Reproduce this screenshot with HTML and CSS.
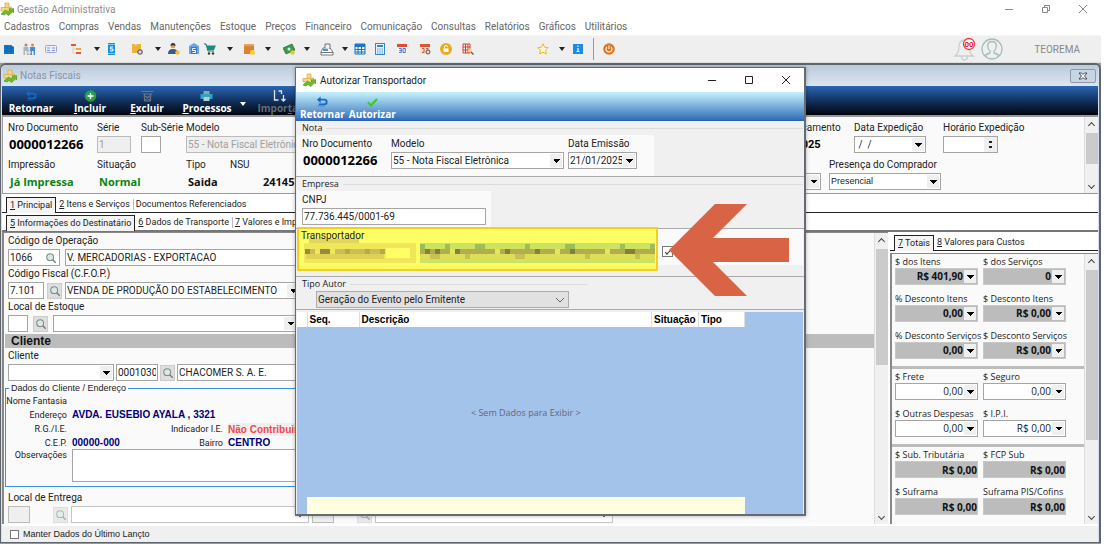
FILE: index.html
```html
<!DOCTYPE html>
<html lang="pt-BR">
<head>
<meta charset="utf-8">
<title>Gestão Administrativa</title>
<link rel="stylesheet" href="styles.css">
</head>
<body>
<svg class="defs" aria-hidden="true">
  <symbol id="logo" viewBox="0 0 14 14"><path d="M5 1h4v4h2.500v4H1V5.500h4z" fill="#f3d983" stroke="#cfa944" stroke-width=".7"/><path d="M5 5.500h4" stroke="#cfa944" stroke-width=".7"/><path d="M1 12l4.500-4 2.500 2 2-2-1.200-1.200H14V11l-1.200-1.200L8.500 13.500 6 11.500 4 13z" fill="#6fbb2a" stroke="#4a8f18" stroke-width=".6"/></symbol>
  <symbol id="lens" viewBox="0 0 14 14"><circle cx="6" cy="6" r="4" fill="#dbe7e2" stroke="#7d8f8a" stroke-width="1.200"/><path d="M9 9l3.500 3.500" stroke="#777" stroke-width="1.500"/></symbol>
  <symbol id="back" viewBox="0 0 14 12"><path d="M3.500 3.500h5.500q2.500 0 2.500 2.500T9 8.500H3" fill="none" stroke="#1967c4" stroke-width="2"/><path d="M5 0v7L1 3.500z" fill="#1967c4"/><path d="M2 10.500h8" stroke="#1967c4" stroke-width="1" stroke-dasharray="1 1"/></symbol>
</svg>

<header class="titlebar">
  <svg class="logo"><use href="#logo"/></svg>
  <h1>Gestão Administrativa</h1>
  <div class="win-buttons main-buttons">
    <button aria-label="Minimizar"><svg viewBox="0 0 10 10"><path d="M1 5.500h8"/></svg></button>
    <button aria-label="Restaurar"><svg viewBox="0 0 10 10"><path d="M1.500 3.500h5v5h-5zM3.500 3V1.500h5v5H7"/></svg></button>
    <button aria-label="Fechar"><svg viewBox="0 0 10 10"><path d="M1 1l8 8M9 1L1 9"/></svg></button>
  </div>
</header>
<nav class="menubar">
  <a href="#">Cadastros</a><a href="#">Compras</a><a href="#">Vendas</a><a href="#">Manutenções</a><a href="#">Estoque</a><a href="#">Preços</a><a href="#">Financeiro</a><a href="#">Comunicação</a><a href="#">Consultas</a><a href="#">Relatórios</a><a href="#">Gráficos</a><a href="#">Utilitários</a>
</nav>
<div class="toolbar">
  <div class="tools">
    <button aria-label="Empresas"><svg viewBox="0 0 12 12"><path d="M1 2h7l3 2v7H1z" fill="#1478c8"/><path d="M1 5h10M1 8h10M4 2v9M8 2v9" stroke="#0b5ea6" stroke-width=".6"/></svg></button>
    <button aria-label="Parceiros"><svg class="wide" viewBox="0 0 14 13"><circle cx="4" cy="2" r="1.500" fill="#b98463"/><circle cx="10.500" cy="2" r="1.500" fill="#c98b66"/><path d="M1.500 4h5v8h-1.500V8H3v4H1.500z" fill="#a5b8ba"/><path d="M8 4h5v8h-1.500V8H10v4H8z" fill="#3f8fd8"/><path d="M5 8h4v3H5z" fill="#f2e2d0" stroke="#a98" stroke-width=".6"/></svg></button>
    <button aria-label="Cartões"><svg viewBox="0 0 12 12"><rect x=".5" y="2.500" width="11" height="7" rx="1" fill="#eef" stroke="#9aa4dc"/><path d="M2 5h3M7 5h3M2 7.500h3M7 7.500h3" stroke="#8790d0"/></svg></button>
    <button aria-label="Estrutura"><svg viewBox="0 0 12 12"><path d="M1 1h5v2H1zM6 9h5v2H6z" fill="#e8552c"/><path d="M6 5h5v2H6z" fill="#f4a63a"/><path d="M3 3v7h3M3 6h3" fill="none" stroke="#d9d0c0"/></svg></button>
    <button class="caret" aria-label="Mais"></button>
    <button aria-label="Serviços"><svg viewBox="0 0 12 12"><path d="M2 0h7v12H2z" fill="#1b8fe0"/><path d="M2 1.500h7M2 10.500h7" stroke="#6fd0f0"/><path d="M7 4H4.500v2H7v2H4" fill="none" stroke="#fff"/></svg></button>
    <button aria-label="Produtos"><svg viewBox="0 0 12 12"><path d="M1 1h3l1 2 1-2h4v9H1z" fill="#f0b434"/><circle cx="9" cy="9" r="2.200" fill="#ddd" stroke="#667" stroke-width="1.200"/></svg></button>
    <button class="caret" aria-label="Mais"></button>
    <button aria-label="Vendedor"><svg viewBox="0 0 12 12"><circle cx="5" cy="3" r="2.300" fill="#d79b5a"/><path d="M2.500 3q0-3 2.500-3t2.500 3L5 2z" fill="#333"/><path d="M0 11q0-5 5-5t5 5z" fill="#3a5a86"/><circle cx="9.500" cy="9.500" r="2.200" fill="#f6bd2d"/></svg></button>
    <button aria-label="Notas"><svg viewBox="0 0 12 12"><path d="M1 3l5-3 5 3v8H1z" fill="#6ea5e0"/><path d="M3 4h6v7H3z" fill="#3478cc"/><path d="M7.500 5.500h-3v2h3v2h-3" fill="none" stroke="#fff"/></svg></button>
    <button aria-label="Carrinho"><svg viewBox="0 0 12 12"><path d="M0 1h2l2 7h6" fill="none" stroke="#176c66"/><path d="M2.500 2.500H12L10 7H4z" fill="#12907e"/><circle cx="5" cy="10.500" r="1.200" fill="#333"/><circle cx="9" cy="10.500" r="1.200" fill="#333"/></svg></button>
    <button class="caret" aria-label="Mais"></button>
    <button aria-label="Estoque"><svg viewBox="0 0 12 12"><path d="M1 1h10v10H1z" fill="#da8433"/><path d="M1 1h10v2H1z" fill="#eaa35a"/><circle cx="9.500" cy="9.500" r="2.500" fill="#f9cf3c"/></svg></button>
    <button class="caret" aria-label="Mais"></button>
    <button aria-label="Preços"><svg viewBox="0 0 12 12"><path d="M0 5l9-4 3 6-9 4z" fill="#3c9b4c" stroke="#1d6a30" stroke-width=".7"/><circle cx="6" cy="6" r="1.500" fill="#d8f0d0"/><circle cx="9.500" cy="9.500" r="2.200" fill="#e4c63c"/></svg></button>
    <button class="caret" aria-label="Mais"></button>
    <button aria-label="Caixa"><svg class="wide" viewBox="0 0 14 13"><path d="M1 12V9l2-4h7l3 4v3z" fill="#fff" stroke="#555" stroke-width=".8"/><path d="M5 5V1h5v5M1 9.500h12" fill="#eef" stroke="#555" stroke-width=".8"/><path d="M3 6h5v2H3z" fill="#36a0dc"/></svg></button>
    <button class="caret" aria-label="Mais"></button>
    <button aria-label="Agenda"><svg viewBox="0 0 12 12"><path d="M1 1h10v10H1z" fill="#e8f4ff" stroke="#1777c8"/><path d="M1 1h10v3H1z" fill="#1777c8"/><path d="M1 6.500h10M1 9h10M4 4v7M7.500 4v7" stroke="#1777c8"/></svg></button>
    <button aria-label="Calculadora"><svg viewBox="0 0 12 12"><rect x="1.500" y=".5" width="9" height="11" fill="#e8f3fc" stroke="#3686c8"/><path d="M3 2h6v2H3z" fill="#3686c8"/><path d="M3 6h6M3 8h6M3 10h6" stroke="#4f9bd8" stroke-dasharray="1.500 .8"/></svg></button>
    <button aria-label="Calendário 30"><svg viewBox="0 0 12 12"><path d="M1 1h10v10H1z" fill="#f3f5fa"/><path d="M1 1h10v3H1z" fill="#e14a35"/><path d="M3 5.500h2.300v4H3M3.300 7.500h2M7 5.500h2.300v4H7z" fill="none" stroke="#3c66c0" stroke-width=".9"/></svg></button>
    <button aria-label="Calendário configurado"><svg viewBox="0 0 12 12"><path d="M1 1h10v10H1z" fill="#f0dfd4"/><path d="M1 1h10v3H1z" fill="#e0542d"/><path d="M3 5.500h2v4H3M7 5.500h2v2" fill="none" stroke="#c55a3c"/><circle cx="9" cy="9" r="2" fill="#ddd" stroke="#555"/></svg></button>
    <button aria-label="Bloquear"><svg viewBox="0 0 12 12"><circle cx="6" cy="6" r="6" fill="#eba91e"/><path d="M3.500 5.500h5v3.500h-5z" fill="#fff"/><path d="M4.500 5.500V4q0-1.500 1.500-1.500T7.500 4" fill="none" stroke="#fff"/></svg></button>
    <button aria-label="Pesquisar planilha"><svg viewBox="0 0 12 12"><path d="M1 1h7v9H1z" fill="#fff" stroke="#d13a35"/><path d="M1 4h7M1 7h7M3.500 1v9M6 1v9" stroke="#d13a35"/><circle cx="8" cy="7.500" r="2" fill="#ffd66e"/><path d="M9 9l2.500 2.500" stroke="#555" stroke-width="1.200"/></svg></button>
    <span></span>
    <button aria-label="Favoritos"><svg viewBox="0 0 12 12"><path d="M6 .8l1.600 3.500 3.700.4-2.800 2.500.8 3.800L6 9.100 2.700 11l.8-3.800L.7 4.700l3.700-.4z" fill="#fffbe0" stroke="#f4b81c"/></svg></button>
    <button class="caret" aria-label="Mais"></button>
    <button aria-label="Informações"><svg viewBox="0 0 12 12"><path d="M1 1h10v10H1z" fill="#1b8be8"/><path d="M6 2.500v1.500M6 5v3M4.500 8.500h3" stroke="#fff" stroke-width="1.200"/></svg></button>
    <i class="divider"></i>
    <button aria-label="Sair"><svg viewBox="0 0 12 12"><circle cx="6" cy="6" r="5.800" fill="#e07420"/><path d="M4 3.800a3 3 0 1 0 4 0M6 2.500V6" fill="none" stroke="#fff" stroke-width="1.100"/></svg></button>
  </div>
  <div class="account">
    <svg class="bell" viewBox="0 0 24 26"><path d="M2 20q4-3 4-10 0-5 5-6 5 1 5 6 0 7 4 10zM8.500 20q0 4 3 4t3-4" fill="none" stroke="#c9cfd0" stroke-width="1.300"/><circle cx="16" cy="8" r="5.500" fill="#fff" stroke="#ee3a3a" stroke-width="1.300"/><text x="16" y="11" text-anchor="middle">00</text></svg>
    <svg class="user" viewBox="0 0 22 22"><circle cx="11" cy="11" r="10" fill="none" stroke="#a9bcbc" stroke-width="1.300"/><path d="M4 18q1-2 5-3V13Q6 10 7 6q1-2.500 4-2.500T15 6q1 4-2 7v2q4 1 5 3" fill="none" stroke="#a9bcbc" stroke-width="1.300"/></svg>
    <span>TEOREMA</span>
  </div>
</div>

<main class="workspace">
  <section class="invoice">
    <div class="invoice-title"><svg class="logo"><use href="#logo"/></svg><h2>Notas Fiscais</h2>
      <button class="mdi-close" aria-label="Fechar"><svg viewBox="0 0 10 8"><path d="M1 1h2.500L5 2.500 6.500 1H9L6.500 4 9 7H6.500L5 5.500 3.500 7H1L3.500 4z" fill="#fff" stroke="#444b58"/></svg></button></div>
    <div class="ribbon">
      <button><svg><use href="#back"/></svg>Retornar</button>
      <button><svg viewBox="0 0 12 12"><circle cx="6" cy="6" r="5.800" fill="#25a046"/><path d="M6 3v6M3 6h6" stroke="#fff" stroke-width="1.400"/></svg><span><u>I</u>ncluir</span></button>
      <button><svg viewBox="0 0 12 12"><path d="M0 1.500h12M1.500 4h9M3 4v7M9 4v7M3 11h6M4 10l4-4M4 6l4 4" fill="none" stroke="#6d7683" stroke-width="1.200"/></svg><span><u>E</u>xcluir</span></button>
      <button><svg viewBox="0 0 12 12"><path d="M3 1h6v3H3z" fill="#8aa7b6"/><path d="M0 4h12v5H0z" fill="#31a1c0"/><path d="M3 7h6v4H3z" fill="#b8ccd6"/></svg><span><u>P</u>rocessos</span></button>
      <button class="caret light" aria-label="Mais processos"></button>
      <button class="off"><svg viewBox="0 0 12 12"><path d="M1 0v10h4M5 1h3v3M10 5v6M8 9l2 2 2-2" fill="none" stroke="#dfe5ec" stroke-width="1.300"/></svg><span>Impor<u>t</u>ar</span></button>
    </div>

    <div class="head">
      <div class="head-left">
        <div class="field"><span>Nro Documento</span><output class="big">0000012266</output></div>
        <label class="field">Série<input class="w34" value="1" disabled></label>
        <label class="field">Sub-Série<input class="w20"></label>
        <label class="field span2">Modelo<select class="w200" disabled><option>55 - Nota Fiscal Eletrônica</option></select></label>
        <div class="field"><span>Impressão</span><output class="strong green">Já Impressa</output></div>
        <div class="field span2"><span>Situação</span><output class="strong green">Normal</output></div>
        <div class="field"><span>Tipo</span><output class="strong">Saida</output></div>
        <div class="field"><span>NSU</span><output class="strong nsu">241457</output></div>
      </div>
      <div class="head-right">
        <div class="line">
          <div class="field w92"><span>Data Lançamento</span><output class="date">21/01/2025</output></div>
          <label class="field w89">Data Expedição<select class="w72"><option>&nbsp;/&nbsp; /</option></select></label>
          <label class="field">Horário Expedição<span class="spin"><input><i></i></span></label>
        </div>
        <div class="line gap8">
          <label class="field">Destino<select class="w59"><option></option></select></label>
          <label class="field presence">Presença do Comprador<select class="w112 sans"><option>Presencial</option></select></label>
        </div>
      </div>
      <div class="scroll"><b class="up"></b><i class="thumb t32"></i><b class="down"></b></div>
    </div>

    <div class="tabs"><button class="on"><u>1</u> Principal</button><button><u>2</u> Itens e Serviços</button><button class="sep">Documentos Referenciados</button></div>
    <div class="tabs second"><button class="on"><u>5</u> Informações do Destinatário</button><button><u>6</u> Dados de Transporte</button><button class="sep"><u>7</u> Valores e Impostos</button></div>

    <div class="content">
      <div class="form">
        <div class="form-body">
          <div class="block"><label for="op">Código de Operação</label>
            <div class="row gap5"><span class="combo"><input id="op" value="1066"><button aria-label="Buscar"><svg><use href="#lens"/></svg></button></span><input class="w300" aria-label="Operação" value="V. MERCADORIAS - EXPORTACAO"></div></div>
          <div class="block"><label for="cf">Código Fiscal (C.F.O.P.)</label>
            <div class="row gap3"><input id="cf" class="w36" value="7.101"><button class="find" aria-label="Buscar"><svg><use href="#lens"/></svg></button><select class="w236" aria-label="CFOP"><option>VENDA DE PRODUÇÃO DO ESTABELECIMENTO</option></select></div></div>
          <div class="block"><label for="le">Local de Estoque</label>
            <div class="row gap5"><input id="le" class="w20"><button class="find" aria-label="Buscar"><svg><use href="#lens"/></svg></button><select class="w245" aria-label="Estoque"><option></option></select></div></div>
          <h3>Cliente</h3>
          <div class="block"><label for="cl">Cliente</label>
            <div class="row gap2"><select id="cl" class="w106"><option></option></select><input class="w42" aria-label="Código do cliente" value="0001030"><button class="find" aria-label="Buscar"><svg><use href="#lens"/></svg></button><input class="w300" aria-label="Nome do cliente" value="CHACOMER S. A. E."></div></div>
          <fieldset>
            <legend>Dados do Cliente / Endereço</legend>
            <div class="client">
              <span class="key">Nome Fantasia</span><span class="wide3"></span>
              <span class="key">Endereço</span><b class="wide3">AVDA. EUSEBIO AYALA , 3321</b>
              <span class="key">R.G./I.E.</span><b></b><span class="key">Indicador I.E.</span><em>Não Contribuinte</em>
              <span class="key">C.E.P.</span><b>00000-000</b><span class="key">Bairro</span><b>CENTRO</b>
              <label class="key" for="obs">Observações</label><textarea id="obs" class="wide3"></textarea>
            </div>
          </fieldset>
          <div class="block last"><label for="ent">Local de Entrega</label>
            <div class="row gap3"><input id="ent" class="w22" disabled><button class="find faded" aria-label="Buscar" disabled><svg><use href="#lens"/></svg></button><select class="w238 chev" aria-label="Entrega"><option></option></select><input class="w22" aria-label="Código" disabled><button class="find faded" aria-label="Buscar" disabled><svg><use href="#lens"/></svg></button><select class="w238 chev" aria-label="Descrição"><option></option></select></div></div>
        </div>
        <div class="scroll"><b class="up"></b><i class="thumb t116"></i><b class="down"></b></div>
      </div>
      <aside class="totals">
        <div class="tabs"><button class="on"><u>7</u> Totais</button><button><u>8</u> Valores para Custos</button></div>
        <div class="totals-body">
          <div class="groups">
            <div class="group gray">
              <label>$ dos Itens<select><option>R$ 401,90</option></select></label><label>$ dos Serviços<select><option>0</option></select></label>
              <label>% Desconto Itens<select><option>0,00</option></select></label><label>$ Desconto Itens<select><option>R$ 0,00</option></select></label>
              <label>% Desconto Serviços<select><option>0,00</option></select></label><label>$ Desconto Serviços<select><option>R$ 0,00</option></select></label>
            </div>
            <div class="group">
              <label>$ Frete<select><option>0,00</option></select></label><label>$ Seguro<select><option>0,00</option></select></label>
              <label>$ Outras Despesas<select><option>0,00</option></select></label><label>$ I.P.I.<select><option>R$ 0,00</option></select></label>
            </div>
            <div class="group gray">
              <label>$ Sub. Tributária<input value="R$ 0,00"></label><label>$ FCP Sub<input value="R$ 0,00"></label>
              <label>$ Suframa<input value="R$ 0,00"></label><label>Suframa PIS/Cofins<input value="R$ 0,00"></label>
              <span></span><label>$ Desp. Financeira<input value="R$ 0,00"></label>
            </div>
          </div>
          <div class="scroll"><b class="up"></b><i class="thumb t170"></i><b class="down"></b></div>
        </div>
      </aside>
    </div>
    <label class="status"><input type="checkbox">Manter Dados do Último Lançto</label>
  </section>
</main>

<section class="dialog" role="dialog" aria-labelledby="dlg">
  <div class="dialog-title"><svg class="logo"><use href="#logo"/></svg><h2 id="dlg">Autorizar Transportador</h2>
    <div class="win-buttons">
      <button aria-label="Minimizar"><svg viewBox="0 0 10 10"><path d="M1 5.500h8"/></svg></button>
      <button aria-label="Maximizar"><svg viewBox="0 0 10 10"><path d="M1.500 1.500h7v7h-7z"/></svg></button>
      <button aria-label="Fechar"><svg viewBox="0 0 10 10"><path d="M1 1l8 8M9 1L1 9"/></svg></button>
    </div></div>
  <div class="dialog-ribbon">
    <button><svg><use href="#back"/></svg>Retornar</button>
    <button><svg viewBox="0 0 12 12"><path d="M1.500 6.500l3 3L10.500 3" fill="none" stroke="#3ccb1e" stroke-width="2"/></svg>Autorizar</button>
  </div>
  <div class="panel">
    <div class="caption">Nota</div>
    <div class="plate nota">
      <div class="field"><span>Nro Documento</span><output class="big">0000012266</output></div>
      <label class="field">Modelo<select class="w173"><option>55 - Nota Fiscal Eletrônica</option></select></label>
      <label class="field">Data Emissão<select class="w69"><option>21/01/2025</option></select></label>
    </div>
  </div>
  <div class="panel">
    <div class="caption">Empresa</div>
    <div class="plate empresa"><label class="field">CNPJ<input class="w184" value="77.736.445/0001-69"></label></div>
  </div>
  <div class="panel carrier">
    <div class="carrier-plate"><span>Transportador</span><input type="checkbox" checked aria-label="Transportador autorizado"></div>
    <div class="highlight">
      <svg viewBox="0 0 357 40" shape-rendering="crispEdges">
        <path d="M10 12h50" stroke="#dfd65a" stroke-width="5"/>
        <path d="M5 24h112" stroke="#f0e65a" stroke-width="20"/>
        <path d="M7 27h78" stroke="#dfd156" stroke-width="5"/>
        <path d="M87 24h24" stroke="#ffff64" stroke-width="10"/>
        <path d="M6 22h5M21 22h10" stroke="#978c3b" stroke-width="5"/>
        <path d="M11 22h5M36 22h50" stroke="#cabf50" stroke-width="5"/>
        <path d="M46 22h5M66 22h5M81 22h5" stroke="#b6a946" stroke-width="5"/>
        <path d="M121 24h235" stroke="#cbe360" stroke-width="20"/>
        <path d="M121 27h235" stroke="#dddf58" stroke-width="5"/>
        <path d="M121 22h235" stroke="#b5ad49" stroke-width="5"/>
        <path d="M121 17h5M146 17h5M176 17h10M226 17h5M266 17h10M321 17h5M351 17h5" stroke="#9bbf58" stroke-width="5"/>
        <path d="M126 22h5M136 22h5M156 22h5M206 22h5M236 22h5M271 22h5M326 22h10" stroke="#858038" stroke-width="5"/>
        <path d="M151 22h5M196 22h5M256 22h5M306 22h5" stroke="#e6e55b" stroke-width="5"/>
        <path d="M131 27h10M166 27h5M216 27h10M286 27h5M336 27h5" stroke="#c8c052" stroke-width="5"/>
      </svg>
    </div>
    <svg class="arrow" viewBox="0 0 120 92"><path d="M0 46L46 0h32L44 34h76v24H44l34 34H46z" fill="#d96345"/></svg>
  </div>
  <div class="panel author">
    <div class="caption"><label for="ta">Tipo Autor</label></div>
    <select id="ta" class="chev w253"><option>Geração do Evento pelo Emitente</option></select>
  </div>
  <div class="grid">
    <table>
      <thead><tr><th class="c0"></th><th class="c1">Seq.</th><th>Descrição</th><th class="c3">Situação</th><th class="c4">Tipo</th></tr></thead>
      <tbody><tr><td colspan="5">&lt; Sem Dados para Exibir &gt;</td></tr></tbody>
      <tfoot><tr><td class="c0"></td><td colspan="4"></td></tr></tfoot>
    </table>
  </div>
</section>
</body>
</html>
```
FILE: styles.css
```css
* { box-sizing: border-box; }
body { margin: 0; padding-right: 5px; height: 100vh; display: flex; flex-direction: column; overflow: hidden; background: #fff; color: #222; font: 10px/13px Roboto, "Noto Sans", sans-serif; }
h1, h2, h3 { margin: 0; font: inherit; }
button, input, select, textarea { font: inherit; color: inherit; margin: 0; border-radius: 0; }
button { border: 0; background: none; padding: 0; }
input, select, textarea { height: 17px; border: 1px solid #a5a5a5; background-color: #fff; padding: 0 1px; line-height: 15px; }
.defs { position: absolute; width: 0; height: 0; }
.logo { width: 14px; height: 14px; flex: none; }

select { appearance: none; padding-right: 14px; background-repeat: no-repeat;
  background-image: linear-gradient(45deg, transparent 50%, #000 50%), linear-gradient(135deg, #000 50%, transparent 50%), linear-gradient(#efefef, #efefef);
  background-size: 4px 4px, 4px 4px, 12px 13px;
  background-position: right 6px top 6px, right 2px top 6px, right 1px top 1px; }
select:disabled, input:disabled { opacity: 1; background-color: #efefef; color: #a0a0a0; border-color: #bbb; }
.caret::before { content: ""; display: block; margin: auto; width: 0; border: 3px solid transparent; border-top: 4px solid #222; border-bottom: 0; }
.caret.light::before { border-top-color: #fff; }

.titlebar { display: flex; align-items: center; height: 18px; gap: 3px; color: #8c8c8c; }
.titlebar h1 { flex: 1; }
.win-buttons { display: flex; }
.win-buttons button { width: 37px; height: 18px; display: grid; place-items: center; }
.win-buttons svg { width: 10px; height: 10px; fill: none; stroke: #222; }
.main-buttons svg { stroke: #888; }
.menubar { display: flex; gap: 9px; height: 17px; padding: 2px 4px 0; }
.menubar a { color: #666; text-decoration: none; }
.toolbar { display: flex; justify-content: space-between; align-items: center; height: 28px; background: #efefef; border-top: 1px solid #f7f7f7; border-bottom: 1px solid #ddd; }
.tools { display: grid; align-items: center; justify-items: center; grid-template-columns: 18px 22px 22px 28px 14px 16px 34px 8px 24px 16px 16px 24px 14px 24px 18px 18px 22px 14px 16px 24px 20px 26px 16px 28px 52px 18px 20px 12px 18px 14px; }
.tools button { display: grid; place-items: center; }
.tools svg { width: 12px; height: 12px; }
.tools svg.wide { width: 14px; height: 13px; }
.divider { width: 1px; height: 22px; background: #999; }
.account { display: flex; align-items: center; color: #888; padding-right: 21px; }
.bell { width: 24px; height: 26px; margin-right: 4px; }
.bell text { font-size: 8px; font-weight: 700; fill: #e02038; }
.user { width: 22px; height: 22px; margin-right: 31px; }

.workspace { flex: 1; min-height: 0; display: flex; padding-bottom: 1px; background: #999; }
.invoice { flex: 1; min-width: 0; display: flex; flex-direction: column; border: 2px solid #5f656d; border-width: 2px 2px 1px 1px; border-radius: 6px 6px 0 0; padding: 0 1px 0 1px; background: #d5e0ec; overflow: hidden; }
.invoice-title { display: flex; align-items: center; gap: 3px; height: 21px; padding: 0 2px 0 1px; background: linear-gradient(#bccad9, #dbe6f2); color: #8795a5; flex: none; }
.invoice-title h2 { flex: 1; }
.mdi-close { width: 26px; height: 14px; border: 1px solid #8c9aab; border-radius: 2px; display: grid; place-items: center; background: #c8d5e3; }
.mdi-close svg { width: 10px; height: 8px; }
.ribbon { display: grid; grid-template-columns: 58px 60px 54px 66px 6px 68px; justify-items: center; height: 29px; flex: none; background: linear-gradient(#2a66b4, #123260 50%, #02050b); color: #fff; font: bold 10px/12px "Open Sans", sans-serif; }
.ribbon button, .dialog-ribbon button { display: flex; flex-direction: column; align-items: center; justify-content: flex-end; }
.ribbon button { padding-bottom: 1px; }
.ribbon svg, .dialog-ribbon svg { width: 13px; height: 12px; flex: none; }
.ribbon .caret { justify-content: center; padding-top: 8px; }
.ribbon .caret::before { margin: 0; }
.ribbon .off { color: #626b78; }

.head { display: flex; flex: none; height: 79px; padding: 4px 0 0 5px; background: #fafafa; border: 1px solid #999; border-width: 2px 0 1px 1px; }
.head-left { display: grid; grid-template-columns: 89px 44px 45px 44px 160px; grid-auto-rows: 37px; }
.head-right { width: 322px; margin-left: auto; display: flex; flex-direction: column; gap: 3px; }
.head .scroll { margin-top: -4px; }
.field { display: flex; flex-direction: column; align-items: flex-start; gap: 2px; white-space: nowrap; }
.span2 { grid-column: span 2; }
.line { display: flex; height: 34px; }
.gap8 { gap: 8px; }
output { line-height: 17px; }
.big { font: bold 13px/17px "Open Sans", sans-serif; color: #000; padding-left: 1px; }
.strong { font: bold 11px/17px "Open Sans", sans-serif; color: #111; padding-left: 2px; }
.green { color: #0a8512; }
.nsu { padding-left: 33px; }
.date { font-weight: 700; font-size: 11px; color: #000; }
.spin { display: flex; width: 55px; height: 17px; border: 1px solid #a5a5a5; background: #fff; }
.spin input { width: 40px; height: 15px; border: 0; background: none; }
.spin i { width: 13px; background: linear-gradient(#222, #222) center 4px / 3px 2px no-repeat, linear-gradient(#222, #222) center 9px / 3px 2px no-repeat, #efefef; }

.scroll { flex: none; width: 14px; display: flex; flex-direction: column; align-items: center; background: #f0f0f0; border-left: 1px solid #ddd; }
.scroll b { height: 16px; width: 13px; display: grid; place-items: center; }
.scroll b::before { content: ""; width: 4px; height: 4px; border: solid #444; border-width: 1px 0 0 1px; transform: rotate(45deg); }
.scroll b.down { margin-top: auto; }
.scroll b.down::before { transform: rotate(225deg); }
.thumb { width: 12px; background: #cbcbcb; }
.t32 { height: 31px; }
.t116 { height: 116px; }
.t170 { height: 170px; }

.tabs { display: flex; align-items: flex-end; flex: none; height: 19px; padding: 0 4px; background: #fff; border-bottom: 1px solid #222; }
.tabs button { height: 15px; padding: 0 3px; white-space: nowrap; font: 9px/13px Roboto, Arial, sans-serif; }
.tabs .on { height: 16px; margin-bottom: -1px; border: 1px solid #222; border-bottom: 0; background: #f4f4f4; }
.tabs .sep { position: relative; }
.tabs .sep::before { content: ""; position: absolute; left: 0; top: 2px; height: 11px; width: 1px; background: #bbb; }
.second { border-bottom: 2px solid #777; }

.content { flex: 1; min-height: 0; display: flex; background: #fff; }
.form { flex: 1; min-width: 0; display: flex; background: #fafafa; border-left: 2px solid #888; border-top: 1px solid #888; }
.form-body { flex: 1; min-width: 0; overflow: hidden; }
.block { padding-left: 4px; height: 33px; display: flex; flex-direction: column; justify-content: flex-end; }
.block > label { height: 15px; }
.row { display: flex; height: 17px; align-items: center; }
.row > * { flex: none; }
.gap2 { gap: 2px; }
.gap3 { gap: 3px; }
.gap5 { gap: 5px; }
.combo { display: flex; align-items: center; width: 52px; height: 17px; border: 1px solid #a5a5a5; background: #fff; }
.combo input { width: 36px; height: 15px; border: 0; background: none; }
.combo svg, .find svg { width: 12px; height: 12px; display: block; margin: auto; }
.find { width: 15px; height: 16px; border: 1px solid #ccc; background: #dedede; }
.faded { margin-left: 20px; opacity: .6; }
.sans { font: 9px/15px "Liberation Sans", Arial, sans-serif; }
.form h3 { margin: 2px 0 0 1px; height: 14px; padding-left: 6px; background: #bcbcbc; font: bold 12px/14px "Liberation Sans", Arial, sans-serif; color: #111; }
fieldset { margin: 1px 0 0 1px; padding: 0 0 4px; border: 1px solid #3a92dc; width: 620px; min-width: 0; height: 105px; }
legend { margin-left: 3px; padding: 0 2px; font: 9px/13px "Liberation Sans", Arial, sans-serif; }
.client { display: grid; grid-template-columns: 61px 93px 53px 200px; grid-template-rows: 12px 15px 14px 13px 33px; column-gap: 5px; align-items: center; }
.client .key { justify-self: end; font-size: 9px; line-height: 12px; white-space: nowrap; }
.client label { align-self: start; }
.client b, .client em { font: bold 10px/13px "Liberation Sans", Arial, sans-serif; color: #000078; }
.client em { color: #f24848; background: #efefef; }
.wide3 { grid-column: span 3; }
textarea { height: 33px; width: 480px; resize: none; }
.last { height: 37px; padding-bottom: 1px; }
.chev { background-image: linear-gradient(45deg, transparent 45%, #666 45% 60%, transparent 60%), linear-gradient(135deg, transparent 40%, #666 40% 55%, transparent 55%); background-size: 4px 4px; background-position: right 8px top 6px, right 4px top 6px; border-color: #c5c5c5; }

.totals { width: 210px; flex: none; display: flex; flex-direction: column; padding-left: 2px; }
.totals > .tabs { height: 19px; margin-bottom: 2px; }
.totals-body { flex: 1; min-height: 0; display: flex; background: #fafafa; border: solid #888; border-width: 1px 0 0 2px; }
.groups { flex: 1; overflow: hidden; }
.group { display: grid; grid-template-columns: 88px 92px; row-gap: 7px; padding: 1px 0 7px 3px; border-bottom: 3px solid #bcbcbc; }
.group label { display: flex; flex-direction: column; white-space: nowrap; font: 9px/13px "Open Sans", sans-serif; }
.group select, .group input { width: 83px; text-align-last: right; text-align: right; padding-right: 14px; font: 10px/15px "Open Sans", sans-serif; }
.group input { padding-right: 0; }
.group.gray select, .group.gray input { background-color: #bcbcbc; border-color: #c8c8c8; font-weight: 700; color: #111; }

.status { display: flex; align-items: center; gap: 4px; flex: none; height: 18px; padding-left: 8px; background: #f0f0f0; border-top: 2px solid #fff; font: 9px/13px "Liberation Sans", Arial, sans-serif; }
input[type="checkbox"] { appearance: none; width: 9px; height: 9px; padding: 0; border: 1px solid #777; background: #fff; }

.w20 { width: 20px; } .w22 { width: 22px; } .w34 { width: 34px; } .w36 { width: 36px; } .w42 { width: 42px; }
.w59 { width: 59px; } .w69 { width: 69px; } .w72 { width: 72px; } .w89 { width: 89px; } .w92 { width: 92px; }
.w106 { width: 106px; } .w112 { width: 112px; } .w173 { width: 173px; } .w184 { width: 184px; } .w200 { width: 200px; }
.w236 { width: 236px; } .w238 { width: 238px; } .w245 { width: 245px; } .w253 { width: 253px; } .w300 { width: 300px; }

/* Modal window floating over the invoice */
.dialog { position: absolute; left: 295px; top: 67px; width: 511px; border: 1px solid #666b73; border-width: 1px 2px 2px 1px; background: #f0f0f0; box-shadow: 0 0 4px rgba(0, 0, 0, .3); }
.dialog-title { display: flex; align-items: center; gap: 4px; height: 24px; padding: 0 0 0 6px; background: #fff; color: #222; }
.dialog-title h2 { flex: 1; }
.dialog-ribbon { display: flex; gap: 4px; height: 29px; padding-left: 4px; background: linear-gradient(#c4f3fe, #7db0da 50%, #2f6dba); border-bottom: 1px solid #2a62ad; color: #fff; font: bold 10px/12px "Open Sans", sans-serif; }
.panel { border-bottom: 1px solid #aaa; padding: 0 1px; }
.caption { display: flex; align-items: center; gap: 4px; height: 14px; padding-left: 5px; font: 9px/14px "Open Sans", sans-serif; }
.caption::after { content: ""; flex: 1; height: 1px; background: #dcdcdc; }
.plate { display: flex; background: #fafafa; padding: 2px 0 0 5px; }
.nota { width: 357px; height: 41px; gap: 4px; }
.nota .field:first-child { width: 85px; }
.empresa { width: 194px; height: 37px; }
.carrier { position: relative; height: 48px; }
.carrier-plate { display: flex; justify-content: space-between; height: 36px; padding: 0 130px 0 4px; background: #fafafa; }
.carrier-plate span { position: relative; z-index: 1; }
.carrier-plate input { margin-top: 17px; width: 11px; height: 11px; display: grid; place-items: center; }
.carrier-plate input::before { content: ""; width: 5px; height: 2px; border: solid #333; border-width: 0 0 1px 1px; transform: rotate(-45deg); }
.highlight { position: absolute; left: 1px; top: -2px; width: 361px; height: 44px; border: 2px solid #f5cf1e; background: rgba(255, 255, 0, .6); }
.highlight svg { display: block; width: 100%; }
.arrow { position: absolute; left: 373px; top: -25px; width: 120px; height: 92px; }
.author { height: 33px; }
.author .caption { width: 291px; }
.author select { display: block; margin-left: 19px; background-color: #e1e1e1; border-color: #adadad; }
.grid { margin: 2px 1px 0; background: #a4c3ea; }
table { width: 448px; border-collapse: collapse; table-layout: fixed; font: bold 10px/13px "Liberation Sans", Arial, sans-serif; color: #000; }
th { height: 15px; padding: 0 2px; text-align: left; background: #fff; border-right: 1px solid #ddd; }
.c0 { width: 10px; } .c1 { width: 52px; } .c3 { width: 47px; } .c4 { width: 46px; }
tbody td { height: 170px; padding: 0 0 0 10px; text-align: center; color: #667; font: 9px/13px "Open Sans", sans-serif; }
tfoot td { height: 17px; padding: 0; background: #fffee0; }
tfoot .c0 { background: #a4c3ea; }
```
